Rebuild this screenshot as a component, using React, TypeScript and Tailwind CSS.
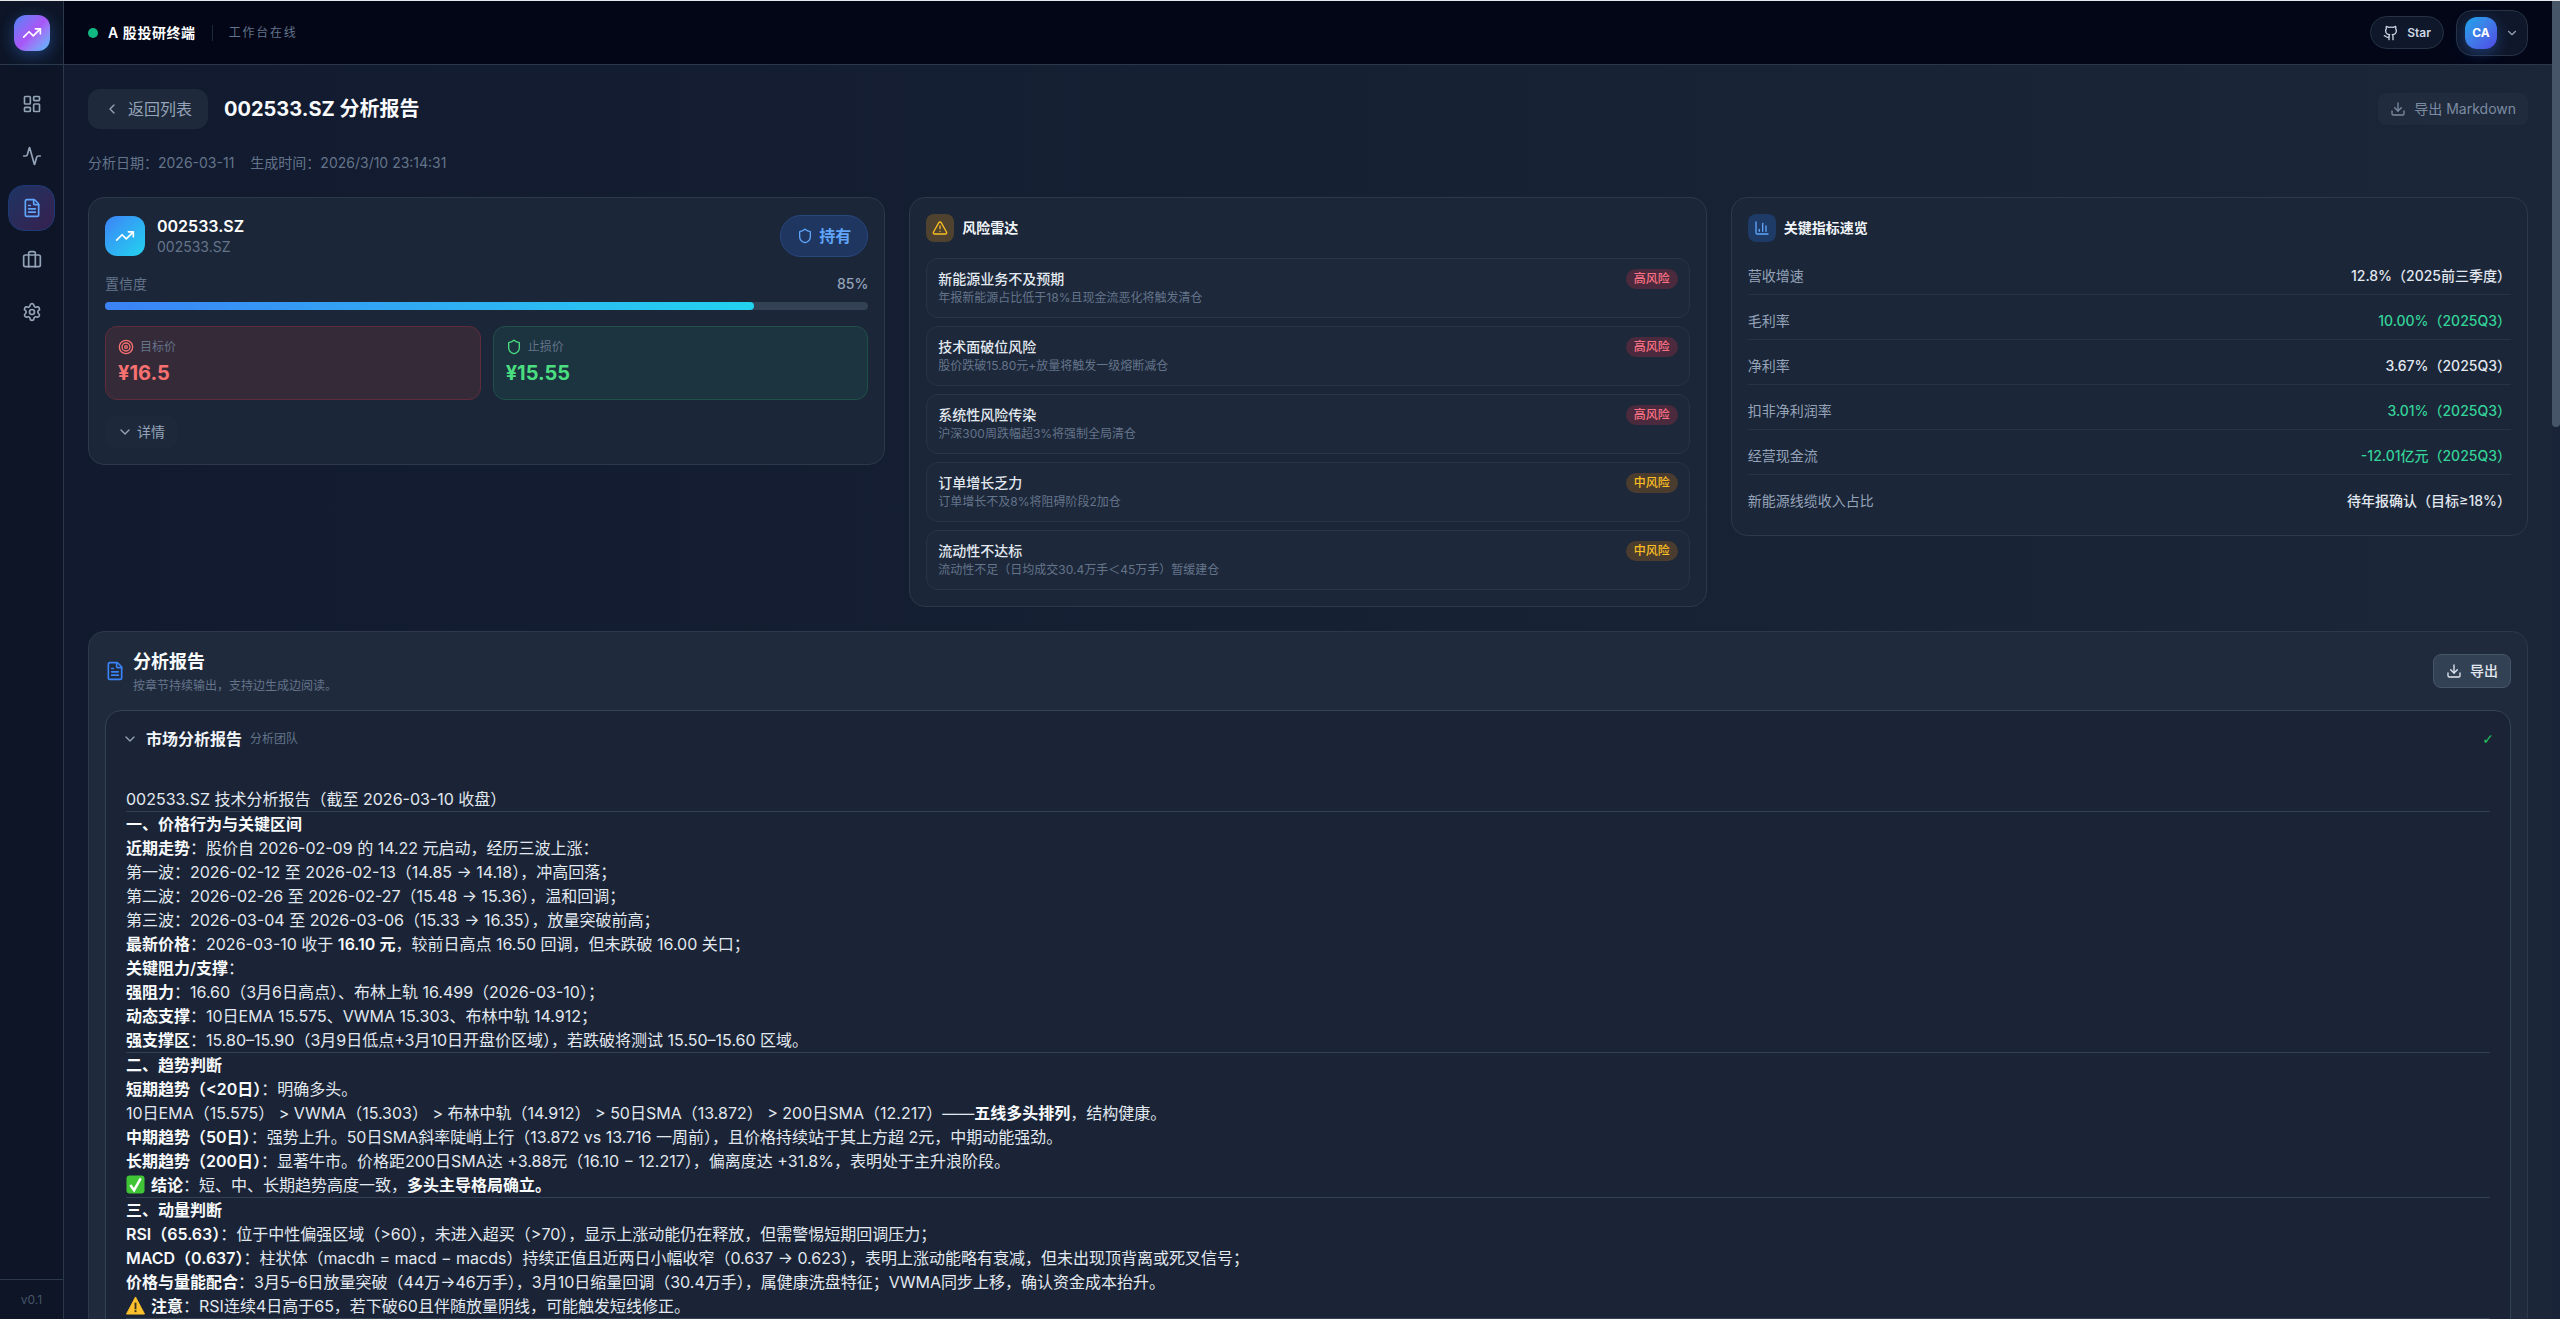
import type { ReactNode } from "react";
import {
  Activity,
  Briefcase,
  ChartColumn,
  ChevronDown,
  ChevronLeft,
  Download,
  FileText,
  Github,
  LayoutDashboard,
  Settings,
  Shield,
  Target,
  TrendingUp,
  TriangleAlert,
} from "lucide-react";

const risks = [
  { title: "新能源业务不及预期", desc: "年报新能源占比低于18%且现金流恶化将触发清仓", level: "高风险" },
  { title: "技术面破位风险", desc: "股价跌破15.80元+放量将触发一级熔断减仓", level: "高风险" },
  { title: "系统性风险传染", desc: "沪深300周跌幅超3%将强制全局清仓", level: "高风险" },
  { title: "订单增长乏力", desc: "订单增长不及8%将阻碍阶段2加仓", level: "中风险" },
  { title: "流动性不达标", desc: "流动性不足（日均成交30.4万手＜45万手）暂缓建仓", level: "中风险" },
];

const metrics = [
  { label: "营收增速", value: "12.8%（2025前三季度）", good: false },
  { label: "毛利率", value: "10.00%（2025Q3）", good: true },
  { label: "净利率", value: "3.67%（2025Q3）", good: false },
  { label: "扣非净利润率", value: "3.01%（2025Q3）", good: true },
  { label: "经营现金流", value: "-12.01亿元（2025Q3）", good: true },
  { label: "新能源线缆收入占比", value: "待年报确认（目标≥18%）", good: false },
];

function B({ children }: { children: ReactNode }) {
  return <strong className="font-semibold text-[#f8fafc]">{children}</strong>;
}

function Hr() {
  return <hr className="border-0 h-px bg-[#334155]" />;
}

function CheckEmoji() {
  return (
    <svg viewBox="0 0 20 20" className="inline-block w-[19px] h-[19px] mr-[6px] align-[-3px]">
      <rect x="0.5" y="0.5" width="19" height="19" rx="3.5" fill="#3fc536" />
      <path d="M4.5 10.5 L8.5 16 L15.5 3.5" fill="none" stroke="#fff" strokeWidth="2.6" />
    </svg>
  );
}

function WarnEmoji() {
  return (
    <svg viewBox="0 0 20 20" className="inline-block w-[19px] h-[19px] mr-[6px] align-[-3px]">
      <path d="M10 1 L19.5 19 H0.5 Z" fill="#fbc02d" stroke="#fbc02d" strokeLinejoin="round" />
      <rect x="9" y="7" width="2" height="7" fill="#3b3320" />
      <rect x="9" y="15" width="2" height="2" fill="#3b3320" />
    </svg>
  );
}

function Sidebar() {
  const items = [
    { icon: LayoutDashboard },
    { icon: Activity },
    { icon: FileText, active: true },
    { icon: Briefcase },
    { icon: Settings },
  ];
  return (
    <aside className="w-16 shrink-0 flex flex-col bg-[#0d1526] border-r border-[#2b384c]">
      <div className="h-[64px] shrink-0 flex items-center justify-center border-b border-[#2b384c]">
        <div className="w-9 h-9 rounded-xl bg-gradient-to-br from-[#3b82f6] via-[#a855f7] to-[#38bdf8] flex items-center justify-center shadow-[0_4px_16px_rgba(59,130,246,0.4)]">
          <TrendingUp className="w-5 h-5 text-white" />
        </div>
      </div>
      <nav className="flex-1 flex flex-col gap-[6px] px-2 pt-4">
        {items.map(({ icon: Icon, active }, i) => (
          <div
            key={i}
            className={
              active
                ? "h-[46px] flex items-center justify-center rounded-2xl border border-[#1e3a75] bg-gradient-to-br from-[#1b3463] to-[#35204f] text-[#60a5fa]"
                : "h-[46px] flex items-center justify-center rounded-2xl border border-transparent text-[#94a3b8]"
            }
          >
            <Icon className="w-5 h-5" />
          </div>
        ))}
      </nav>
      <div className="h-[40px] shrink-0 border-t border-[#2b384c] flex items-center justify-center text-xs text-[#475569]">
        v0.1
      </div>
    </aside>
  );
}

function Header() {
  return (
    <header className="h-[64px] shrink-0 flex items-center justify-between px-6 bg-[#020617] border-b border-[#2b384c]">
      <div className="flex items-center">
        <span className="w-2.5 h-2.5 rounded-full bg-[#10b981]" />
        <span className="ml-[10px] text-sm font-semibold tracking-[0.04em] text-white">A 股投研终端</span>
        <span className="ml-4 w-px h-4 bg-[#1e293b]" />
        <span className="ml-4 text-xs tracking-[0.15em] text-[#64748b]">工作台在线</span>
      </div>
      <div className="flex items-center gap-3">
        <div className="h-[33px] flex items-center gap-2 px-3 rounded-full bg-[#0f172a] border border-[#263245] text-xs font-semibold text-[#cbd5e1]">
          <Github className="w-4 h-4" />
          Star
        </div>
        <div className="flex items-center gap-2 px-2 py-1.5 rounded-2xl bg-[#0f172a] border border-[#263245]">
          <div className="w-8 h-8 rounded-xl bg-gradient-to-br from-[#0ea5e9] to-[#4f46e5] flex items-center justify-center text-xs font-bold text-white shadow-[0_4px_14px_rgba(59,130,246,0.35)]">
            CA
          </div>
          <ChevronDown className="w-3.5 h-3.5 text-[#94a3b8]" />
        </div>
      </div>
    </header>
  );
}

function SummaryCard() {
  return (
    <div className="rounded-2xl border border-[#2c394b] bg-[#1b2638] p-4">
      <div className="h-11 flex items-center justify-between">
        <div className="flex items-center gap-3">
          <div className="w-10 h-10 rounded-xl bg-gradient-to-br from-[#3b82f6] to-[#22d3ee] flex items-center justify-center">
            <TrendingUp className="w-5 h-5 text-white" />
          </div>
          <div>
            <div className="text-base leading-[22px] font-semibold text-white">002533.SZ</div>
            <div className="text-sm leading-5 text-[#64748b]">002533.SZ</div>
          </div>
        </div>
        <div className="flex items-center gap-1.5 px-4 py-2 rounded-full bg-[#1e3660] border border-[#27477f] text-base font-semibold text-[#60a5fa]">
          <Shield className="w-4 h-4" />
          持有
        </div>
      </div>
      <div className="mt-4 flex items-center justify-between text-sm">
        <span className="text-[#64748b]">置信度</span>
        <span className="font-medium text-[#94a3b8]">85%</span>
      </div>
      <div className="mt-2 h-2 rounded-full bg-[#334155]">
        <div className="h-2 rounded-full bg-gradient-to-r from-[#3b82f6] to-[#22d3ee]" style={{ width: "85%" }} />
      </div>
      <div className="mt-4 grid grid-cols-2 gap-3">
        <div className="rounded-xl border border-[#5f2d3a] bg-[#342a38] p-3">
          <div className="flex items-center gap-1.5 text-xs text-[#64748b]">
            <Target className="w-4 h-4 text-[#f87171]" />
            目标价
          </div>
          <div className="mt-1 text-xl font-bold text-[#f87171]">¥16.5</div>
        </div>
        <div className="rounded-xl border border-[#1f5148] bg-[#1c3340] p-3">
          <div className="flex items-center gap-1.5 text-xs text-[#64748b]">
            <Shield className="w-4 h-4 text-[#4ade80]" />
            止损价
          </div>
          <div className="mt-1 text-xl font-bold text-[#4ade80]">¥15.55</div>
        </div>
      </div>
      <div className="mt-4 h-8 w-[72px] flex items-center gap-1 px-3 rounded-lg bg-[#1d283a] text-sm text-[#94a3b8]">
        <ChevronDown className="w-4 h-4 shrink-0" />
        详情
      </div>
    </div>
  );
}

function RiskCard() {
  return (
    <div className="rounded-2xl border border-[#2c394b] bg-[#1b2638] p-4">
      <div className="flex items-center gap-2">
        <div className="w-7 h-7 rounded-lg bg-[#4f422f] flex items-center justify-center">
          <TriangleAlert className="w-4 h-4 text-[#fbbf24]" />
        </div>
        <span className="text-sm font-semibold text-[#f1f5f9]">风险雷达</span>
      </div>
      <div className="mt-4 flex flex-col gap-2">
        {risks.map((r) => (
          <div key={r.title} className="h-[60px] flex items-start justify-between rounded-xl border border-[#283548] bg-[#1d283a] px-[11px] py-[10px]">
            <div>
              <div className="text-sm leading-5 font-medium text-[#e2e8f0]">{r.title}</div>
              <div className="text-xs leading-[18px] text-[#64748b]">{r.desc}</div>
            </div>
            <span
              className={
                r.level === "高风险"
                  ? "h-5 px-2 rounded-full bg-[#4a2a3c] text-xs leading-5 font-medium text-[#fb7185]"
                  : "h-5 px-2 rounded-full bg-[#4a3d2f] text-xs leading-5 font-medium text-[#fbbf24]"
              }
            >
              {r.level}
            </span>
          </div>
        ))}
      </div>
    </div>
  );
}

function MetricsCard() {
  return (
    <div className="rounded-2xl border border-[#2c394b] bg-[#1b2638] p-4">
      <div className="flex items-center gap-2">
        <div className="w-7 h-7 rounded-lg bg-[#1e3a66] flex items-center justify-center">
          <ChartColumn className="w-4 h-4 text-[#60a5fa]" />
        </div>
        <span className="text-sm font-semibold text-[#f1f5f9]">关键指标速览</span>
      </div>
      <div className="mt-2">
        {metrics.map((m, i) => (
          <div
            key={m.label}
            className={
              i < metrics.length - 1
                ? "flex items-center justify-between pt-4 pb-2 text-sm leading-5 border-b border-[#263345]"
                : "flex items-center justify-between pt-4 pb-2 text-sm leading-5"
            }
          >
            <span className="text-[#94a3b8]">{m.label}</span>
            <span className={m.good ? "font-medium text-[#34d399]" : "font-medium text-[#e2e8f0]"}>{m.value}</span>
          </div>
        ))}
      </div>
    </div>
  );
}

function ReportBody() {
  return (
    <div className="px-5 pt-5 text-base leading-6 text-[#e2e8f0]">
      <p>002533.SZ 技术分析报告（截至 2026-03-10 收盘）</p>
      <Hr />
      <p><B>一、价格行为与关键区间</B></p>
      <p><B>近期走势</B>：股价自 2026-02-09 的 14.22 元启动，经历三波上涨：</p>
      <p>第一波：2026-02-12 至 2026-02-13（14.85 → 14.18），冲高回落；</p>
      <p>第二波：2026-02-26 至 2026-02-27（15.48 → 15.36），温和回调；</p>
      <p>第三波：2026-03-04 至 2026-03-06（15.33 → 16.35），放量突破前高；</p>
      <p><B>最新价格</B>：2026-03-10 收于 <B>16.10 元</B>，较前日高点 16.50 回调，但未跌破 16.00 关口；</p>
      <p><B>关键阻力/支撑</B>：</p>
      <p><B>强阻力</B>：16.60（3月6日高点）、布林上轨 16.499（2026-03-10）；</p>
      <p><B>动态支撑</B>：10日EMA 15.575、VWMA 15.303、布林中轨 14.912；</p>
      <p><B>强支撑区</B>：15.80–15.90（3月9日低点+3月10日开盘价区域），若跌破将测试 15.50–15.60 区域。</p>
      <Hr />
      <p><B>二、趋势判断</B></p>
      <p><B>短期趋势（&lt;20日）</B>：明确多头。</p>
      <p>10日EMA（15.575） &gt; VWMA（15.303） &gt; 布林中轨（14.912） &gt; 50日SMA（13.872） &gt; 200日SMA（12.217）——<B>五线多头排列</B>，结构健康。</p>
      <p><B>中期趋势（50日）</B>：强势上升。50日SMA斜率陡峭上行（13.872 vs 13.716 一周前），且价格持续站于其上方超 2元，中期动能强劲。</p>
      <p><B>长期趋势（200日）</B>：显著牛市。价格距200日SMA达 +3.88元（16.10 − 12.217），偏离度达 +31.8%，表明处于主升浪阶段。</p>
      <p><CheckEmoji /><B>结论</B>：短、中、长期趋势高度一致，<B>多头主导格局确立。</B></p>
      <Hr />
      <p><B>三、动量判断</B></p>
      <p><B>RSI（65.63）</B>：位于中性偏强区域（&gt;60），未进入超买（&gt;70），显示上涨动能仍在释放，但需警惕短期回调压力；</p>
      <p><B>MACD（0.637）</B>：柱状体（macdh = macd − macds）持续正值且近两日小幅收窄（0.637 → 0.623），表明上涨动能略有衰减，但未出现顶背离或死叉信号；</p>
      <p><B>价格与量能配合</B>：3月5–6日放量突破（44万→46万手），3月10日缩量回调（30.4万手），属健康洗盘特征；VWMA同步上移，确认资金成本抬升。</p>
      <p><WarnEmoji /><B>注意</B>：RSI连续4日高于65，若下破60且伴随放量阴线，可能触发短线修正。</p>
      <Hr />
    </div>
  );
}

function ReportCard() {
  return (
    <div className="mt-6 rounded-2xl border border-[#2c394b] bg-[#1f2a3c] p-4">
      <div className="flex items-center justify-between">
        <div className="flex items-center gap-2">
          <FileText className="w-5 h-5 text-[#3b82f6]" />
          <div>
            <div className="text-lg font-semibold text-[#f8fafc]">分析报告</div>
            <div className="mt-0.5 text-xs text-[#64748b]">按章节持续输出，支持边生成边阅读。</div>
          </div>
        </div>
        <div className="h-[34px] flex items-center gap-2 px-3 rounded-lg bg-[#334155] border border-[#475569] text-sm font-medium text-[#e2e8f0]">
          <Download className="w-4 h-4" />
          导出
        </div>
      </div>
      <div className="mt-4 rounded-2xl border border-[#334155] bg-[#1a2436] pb-10">
        <div className="flex items-center justify-between px-4 py-4">
          <div className="flex items-center gap-2">
            <ChevronDown className="w-4 h-4 text-[#94a3b8]" />
            <span className="text-base font-semibold text-[#f1f5f9]">市场分析报告</span>
            <span className="text-xs text-[#64748b]">分析团队</span>
          </div>
          <span className="text-sm text-[#22c55e] font-['DejaVu_Sans']">✓</span>
        </div>
        <ReportBody />
      </div>
    </div>
  );
}

export default function App() {
  return (
    <div className="h-screen flex flex-col overflow-hidden bg-[#0f172a] font-[Inter,'Noto_Sans_CJK_SC',sans-serif]">
      <div className="h-px shrink-0 bg-[#e5e7eb]" />
      <div className="flex-1 min-h-0 flex">
        <Sidebar />
        <div className="flex-1 min-w-0 flex flex-col">
          <Header />
          <main className="flex-1 min-h-0 overflow-hidden p-6 bg-gradient-to-r from-[#111a2e] to-[#1c2639]">
            <div className="h-10 flex items-center justify-between">
              <div className="flex items-center gap-4">
                <div className="h-10 flex items-center gap-2 px-4 rounded-xl bg-[#1e293b] text-base text-[#94a3b8]">
                  <ChevronLeft className="w-4 h-4" />
                  返回列表
                </div>
                <h1 className="text-xl font-bold text-[#f8fafc]">002533.SZ 分析报告</h1>
              </div>
              <div className="h-8 flex items-center gap-2 px-3 rounded-lg bg-[#202b3d] text-sm text-[#7c8ba1]">
                <Download className="w-4 h-4" />
                导出 Markdown
              </div>
            </div>
            <div className="mt-6 flex gap-4 text-sm text-[#64748b]">
              <span>分析日期：2026-03-11</span>
              <span>生成时间：2026/3/10 23:14:31</span>
            </div>
            <div className="mt-6 grid grid-cols-3 gap-6 items-start">
              <SummaryCard />
              <RiskCard />
              <MetricsCard />
            </div>
            <ReportCard />
          </main>
        </div>
        <div className="w-2 shrink-0 bg-[#1a2438]">
          <div className="h-[426px] rounded-b-full bg-[#475569]" />
        </div>
      </div>
    </div>
  );
}
